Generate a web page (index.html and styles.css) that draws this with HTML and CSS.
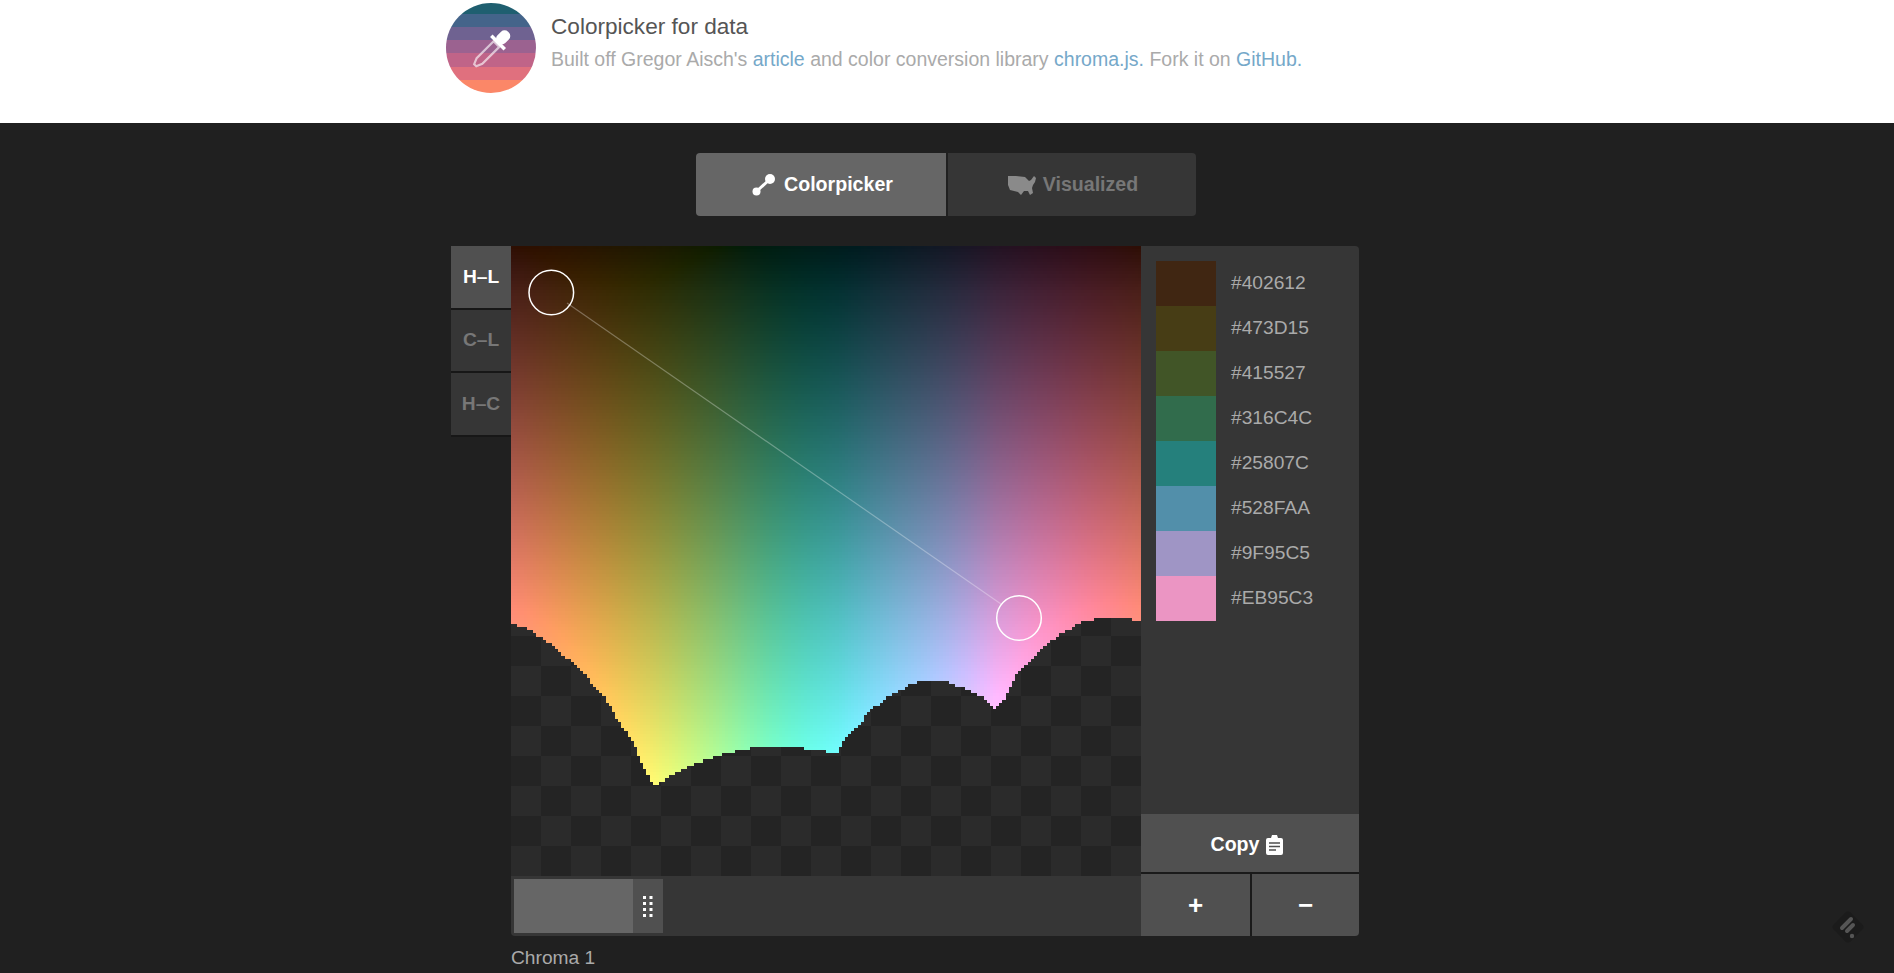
FILE: index.html
```html
<!DOCTYPE html>
<html lang="en">
<head>
    <meta charset="UTF-8">
    <meta name="viewport" content="width=device-width, initial-scale=1.0">
    <title>Colorpicker for data</title>
    <link rel="stylesheet" href="styles.css">
</head>
<body>
    <header class="top">
        <div class="top-inner">
            <svg class="logo" viewBox="0 0 90 90" width="90" height="90">
                <defs><clipPath id="logoClip"><circle cx="45" cy="45" r="45"/></clipPath></defs>
                <g clip-path="url(#logoClip)">
                    <rect width="90" height="11" fill="#1f5f70"/>
                    <rect y="11" width="90" height="13" fill="#44648a"/>
                    <rect y="24" width="90" height="13" fill="#6f6291"/>
                    <rect y="37" width="90" height="13" fill="#9b6290"/>
                    <rect y="50" width="90" height="14" fill="#c06488"/>
                    <rect y="64" width="90" height="13" fill="#e0707e"/>
                    <rect y="77" width="90" height="13" fill="#fb8768"/>
                </g>
                <g transform="translate(45.5 46) rotate(45)">
                    <rect x="-5.5" y="-24" width="11" height="15" rx="5" fill="#fff"/>
                    <rect x="-9.5" y="-11" width="19" height="3.5" fill="#fff"/>
                    <path d="M-4 -7 H4 V17 L1.5 23 H-1.5 L-4 17 Z" fill="none" stroke="#fff" stroke-opacity=".62" stroke-width="2.2"/>
                </g>
            </svg>
            <div class="intro">
                <h1>Colorpicker for data</h1>
                <p>Built off Gregor Aisch's <a href="#">article</a> and color conversion library <a href="#">chroma.js.</a> Fork it on <a href="#">GitHub.</a></p>
            </div>
        </div>
    </header>

    <main class="main">
        <nav class="views">
            <a class="view active" href="#">
                <svg viewBox="0 0 23 22" width="23" height="22"><path d="M5 17 L17 6" stroke="#fff" stroke-width="3"/><circle cx="4.5" cy="17.5" r="4" fill="#fff"/><circle cx="18" cy="5" r="5" fill="#fff"/></svg>
                Colorpicker
            </a>
            <a class="view" href="#">
                <svg viewBox="0 0 30 20" width="30" height="20"><path d="M1 1 L9 1 L18 2 L20 4 L22 6 L24 5 L27 1 L29 3 L28 7 L26 10 L25 13 L26 18 L23 20 L21 16 L17 16 L14 20 L11 17 L7 16 L3 15 L1 10 Z" fill="#8a8a8a"/></svg>
                Visualized
            </a>
        </nav>

        <div class="picker">
            <div class="modes">
                <a class="mode active" href="#">H–L</a>
                <a class="mode" href="#">C–L</a>
                <a class="mode" href="#">H–C</a>
            </div>

            <div class="stage">
                <div class="chart">
                    <canvas id="field" width="630" height="630"></canvas>
                    <svg class="handles" viewBox="0 0 630 630" width="630" height="630">
                        <line x1="56" y1="57" x2="490" y2="358"/>
                        <circle cx="40.3" cy="46.5" r="22.3"/>
                        <circle cx="508" cy="372" r="22.3"/>
                    </svg>
                </div>
                <div class="range">
                    <div class="range-fill"></div>
                    <div class="range-grip">
                        <svg viewBox="0 0 10 21" width="10" height="21" fill="#fff">
                            <rect x="0" y="0" width="3" height="3"/><rect x="6.5" y="0" width="3" height="3"/>
                            <rect x="0" y="6" width="3" height="3"/><rect x="6.5" y="6" width="3" height="3"/>
                            <rect x="0" y="12" width="3" height="3"/><rect x="6.5" y="12" width="3" height="3"/>
                            <rect x="0" y="18" width="3" height="3"/><rect x="6.5" y="18" width="3" height="3"/>
                        </svg>
                    </div>
                </div>
                <div class="range-label">Chroma 1</div>
            </div>

            <aside class="side">
                <ul class="swatches">
                    <li><span class="chip chip-1"></span>#402612</li>
                    <li><span class="chip chip-2"></span>#473D15</li>
                    <li><span class="chip chip-3"></span>#415527</li>
                    <li><span class="chip chip-4"></span>#316C4C</li>
                    <li><span class="chip chip-5"></span>#25807C</li>
                    <li><span class="chip chip-6"></span>#528FAA</li>
                    <li><span class="chip chip-7"></span>#9F95C5</li>
                    <li><span class="chip chip-8"></span>#EB95C3</li>
                </ul>
                <a class="copy" href="#">
                    Copy
                    <svg viewBox="0 0 17 20" width="17" height="20"><path d="M6 0 H11 L12 3 H15 Q17 3 17 5 V18 Q17 20 15 20 H2 Q0 20 0 18 V5 Q0 3 2 3 H5 Z" fill="#fff"/><path d="M3 8 H14 M3 11.5 H14 M3 15 H10" stroke="#505050" stroke-width="1.5"/></svg>
                </a>
                <div class="steps">
                    <a class="step step-plus" href="#">+</a>
                    <a class="step" href="#">−</a>
                </div>
            </aside>
        </div>
    </main>

    <svg class="badge" viewBox="0 0 36 36" width="36" height="36">
        <rect x="6" y="6" width="24" height="24" rx="4" fill="#1b1b1b" transform="rotate(45 18 18)"/>
        <path d="M21 10 L12 19 M23 16 L17 22" stroke="#555" stroke-width="4" stroke-linecap="round"/>
        <circle cx="22" cy="27" r="2.2" fill="#555"/>
    </svg>

    <script src="script.js"></script>
</body>
</html>
```

FILE: styles.css
```css
/* General Styles */
html, body {
    height: 100%;
}

body {
    margin: 0;
    overflow: hidden;
    background-color: #202020;
    font-family: 'Liberation Sans', Arial, sans-serif;
    font-size: 19.2px;
    color: #aaa;
}

a {
    text-decoration: none;
    color: inherit;
}

/* Header Styles */
.top {
    background: #fff;
    height: 123px;
}

.top-inner {
    width: 1002px;
    margin: 0 auto;
    padding-top: 3px;
    display: flex;
    gap: 16px;
}

.intro {
    padding-top: 10px;
}

.intro h1 {
    margin: 0 0 0 -1px;
    font-size: 22.6px;
    font-weight: normal;
    line-height: 28px;
    color: #555;
}

.intro p {
    margin: 5px 0 0 -1px;
    font-size: 19.5px;
    line-height: 26px;
    color: #aaa;
}

.intro a {
    color: #75a8c9;
}

/* View Switch */
.views {
    display: flex;
    justify-content: center;
    gap: 2px;
    padding: 30px 3px 30px 0;
}

.view {
    width: 248px;
    height: 63px;
    padding-left: 2px;
    box-sizing: border-box;
    display: flex;
    align-items: center;
    justify-content: center;
    gap: 6px;
    background: #363636;
    color: #777;
    font-size: 19.6px;
    font-weight: bold;
    border-radius: 0 4px 4px 0;
}

.view.active {
    width: 250px;
    padding: 0 0 0 4px;
    gap: 9px;
    background: #666;
    color: #fff;
    border-radius: 4px 0 0 4px;
}

/* Picker */
.picker {
    width: 1002px;
    margin: 0 auto;
    padding-left: 5px;
    box-sizing: border-box;
    display: flex;
    align-items: flex-start;
}

.modes {
    width: 60px;
    display: flex;
    flex-direction: column;
}

.mode {
    height: 63.6px;
    box-sizing: border-box;
    border-bottom: 2px solid #171717;
    display: flex;
    align-items: center;
    justify-content: center;
    background: #363636;
    color: #777;
    font-weight: bold;
}

.mode.active {
    background: #505050;
    color: #fff;
}

.stage {
    width: 630px;
}

.chart {
    position: relative;
    width: 630px;
    height: 630px;
    background: repeating-conic-gradient(#242424 0 25%, #2b2b2b 0 50%) 0 0 / 60px 60px;
}

.chart canvas {
    display: block;
}

.handles {
    position: absolute;
    left: 0;
    top: 0;
}

.handles line {
    stroke: rgba(255, 255, 255, 0.3);
    stroke-width: 1.2;
}

.handles circle {
    fill: none;
    stroke: #fff;
    stroke-width: 1.5;
}

.range {
    height: 60px;
    box-sizing: border-box;
    padding: 3px;
    display: flex;
    background: #363636;
    border-radius: 0 0 0 4px;
}

.range-fill {
    width: 119px;
    background: #666;
}

.range-grip {
    width: 30px;
    display: flex;
    align-items: center;
    justify-content: center;
    background: #505050;
}

.range-label {
    margin-top: 10px;
    line-height: 24px;
}

/* Side Panel */
.side {
    width: 218px;
    height: 690px;
    display: flex;
    flex-direction: column;
    background: #363636;
    border-radius: 0 4px 4px 0;
    overflow: hidden;
}

.swatches {
    flex: 1;
    list-style: none;
    margin: 0;
    padding: 15px 0 0 15px;
}

.swatches li {
    height: 45px;
    line-height: 43px;
    display: flex;
    align-items: flex-start;
    gap: 15px;
}

.chip {
    width: 60px;
    height: 45px;
}

.chip-1 { background: #402612; }
.chip-2 { background: #473D15; }
.chip-3 { background: #415527; }
.chip-4 { background: #316C4C; }
.chip-5 { background: #25807C; }
.chip-6 { background: #528FAA; }
.chip-7 { background: #9F95C5; }
.chip-8 { background: #EB95C3; }

.copy {
    height: 58px;
    padding: 3px 6px 0 0;
    box-sizing: border-box;
    display: flex;
    align-items: center;
    justify-content: center;
    gap: 7px;
    background: #505050;
    color: #fff;
    font-size: 19.6px;
    font-weight: bold;
}

.steps {
    display: flex;
    gap: 2px;
    padding-top: 2px;
    background: #1a1a1a;
}

.step {
    flex: 1;
    height: 62px;
    display: flex;
    align-items: center;
    justify-content: center;
    background: #505050;
    color: #fff;
    font-size: 26px;
    font-weight: bold;
}

.step-plus {
    flex: none;
    width: 109px;
}

/* Corner Badge */
.badge {
    position: fixed;
    right: 28px;
    bottom: 28px;
}
```

FILE: script.js
```js
// hue-lightness field, drawn in blocks like the original canvas
var canvas = document.getElementById('field');
var ctx = canvas.getContext('2d');
var COUNT = 200;
var CELL = 630 / COUNT;

// x -> hue
var hueKnots = [[0, 36], [142, 103], [326, 197], [484, 325], [630, 396]];
// y -> lightness
var lightKnots = [[0, 8], [46, 18], [372, 72], [540, 97], [630, 105]];
// upper edge of the gamut, measured along x
var edge = [
    [0, 377], [14, 382], [30, 391], [47, 404], [64, 419], [80, 436], [93, 451], [109, 477],
    [122, 497], [132, 519], [142, 540], [167, 526], [188, 516], [213, 508], [246, 501],
    [279, 501], [306, 504], [326, 507], [331, 497], [350, 476], [362, 462], [377, 451],
    [399, 439], [412, 435], [435, 435], [449, 441], [470, 451], [484, 462], [493, 452],
    [501, 436], [511, 422], [528, 406], [545, 391], [569, 377], [588, 372], [615, 372], [630, 375]
];

function lerp(knots, v) {
    for (var i = 1; i < knots.length; i++) {
        if (v <= knots[i][0]) {
            var a = knots[i - 1], b = knots[i];
            return a[1] + (b[1] - a[1]) * (v - a[0]) / (b[0] - a[0]);
        }
    }
    return knots[knots.length - 1][1];
}

function gamma(c) {
    c = c <= 0.0031308 ? 12.92 * c : 1.055 * Math.pow(c, 1 / 2.4) - 0.055;
    return Math.max(0, Math.min(255, Math.round(c * 255)));
}

function finv(t) {
    return t > 6 / 29 ? t * t * t : 3 * (6 / 29) * (6 / 29) * (t - 4 / 29);
}

function linear(l, c, h) {
    var a = c * Math.cos(h * Math.PI / 180);
    var b = c * Math.sin(h * Math.PI / 180);
    var fy = (l + 16) / 116;
    var X = 0.95047 * finv(fy + a / 500);
    var Y = finv(fy);
    var Z = 1.08883 * finv(fy - b / 200);
    return [
        3.2406 * X - 1.5372 * Y - 0.4986 * Z,
        -0.9689 * X + 1.8758 * Y + 0.0415 * Z,
        0.0557 * X - 0.204 * Y + 1.057 * Z
    ];
}

function color(l, c, h) {
    var rgb = linear(l, c, h);
    // pull chroma in until no channel falls far below zero
    while (c > 0 && Math.min(rgb[0], rgb[1], rgb[2]) < -0.004) {
        c -= 1;
        rgb = linear(l, c, h);
    }
    return 'rgb(' + gamma(rgb[0]) + ',' + gamma(rgb[1]) + ',' + gamma(rgb[2]) + ')';
}

for (var i = 0; i < COUNT; i++) {
    for (var j = 0; j < COUNT; j++) {
        var x = (i + 0.5) * CELL;
        var y = (j + 0.5) * CELL;
        if (y > lerp(edge, x)) continue;
        var h = lerp(hueKnots, x);
        var l = lerp(lightKnots, y);
        // warm hues run stronger than cool ones in the reference
        var tilt = Math.cos((h - 70) * Math.PI / 180);
        var c = Math.max(12, 20 + (l - 18) * 0.44) * (1 + (tilt > 0 ? 0.25 : 0.42) * tilt);
        ctx.fillStyle = color(l, c, h);
        var x0 = Math.round(i * CELL), y0 = Math.round(j * CELL);
        ctx.fillRect(x0, y0, Math.round((i + 1) * CELL) - x0, Math.round((j + 1) * CELL) - y0);
    }
}
```
